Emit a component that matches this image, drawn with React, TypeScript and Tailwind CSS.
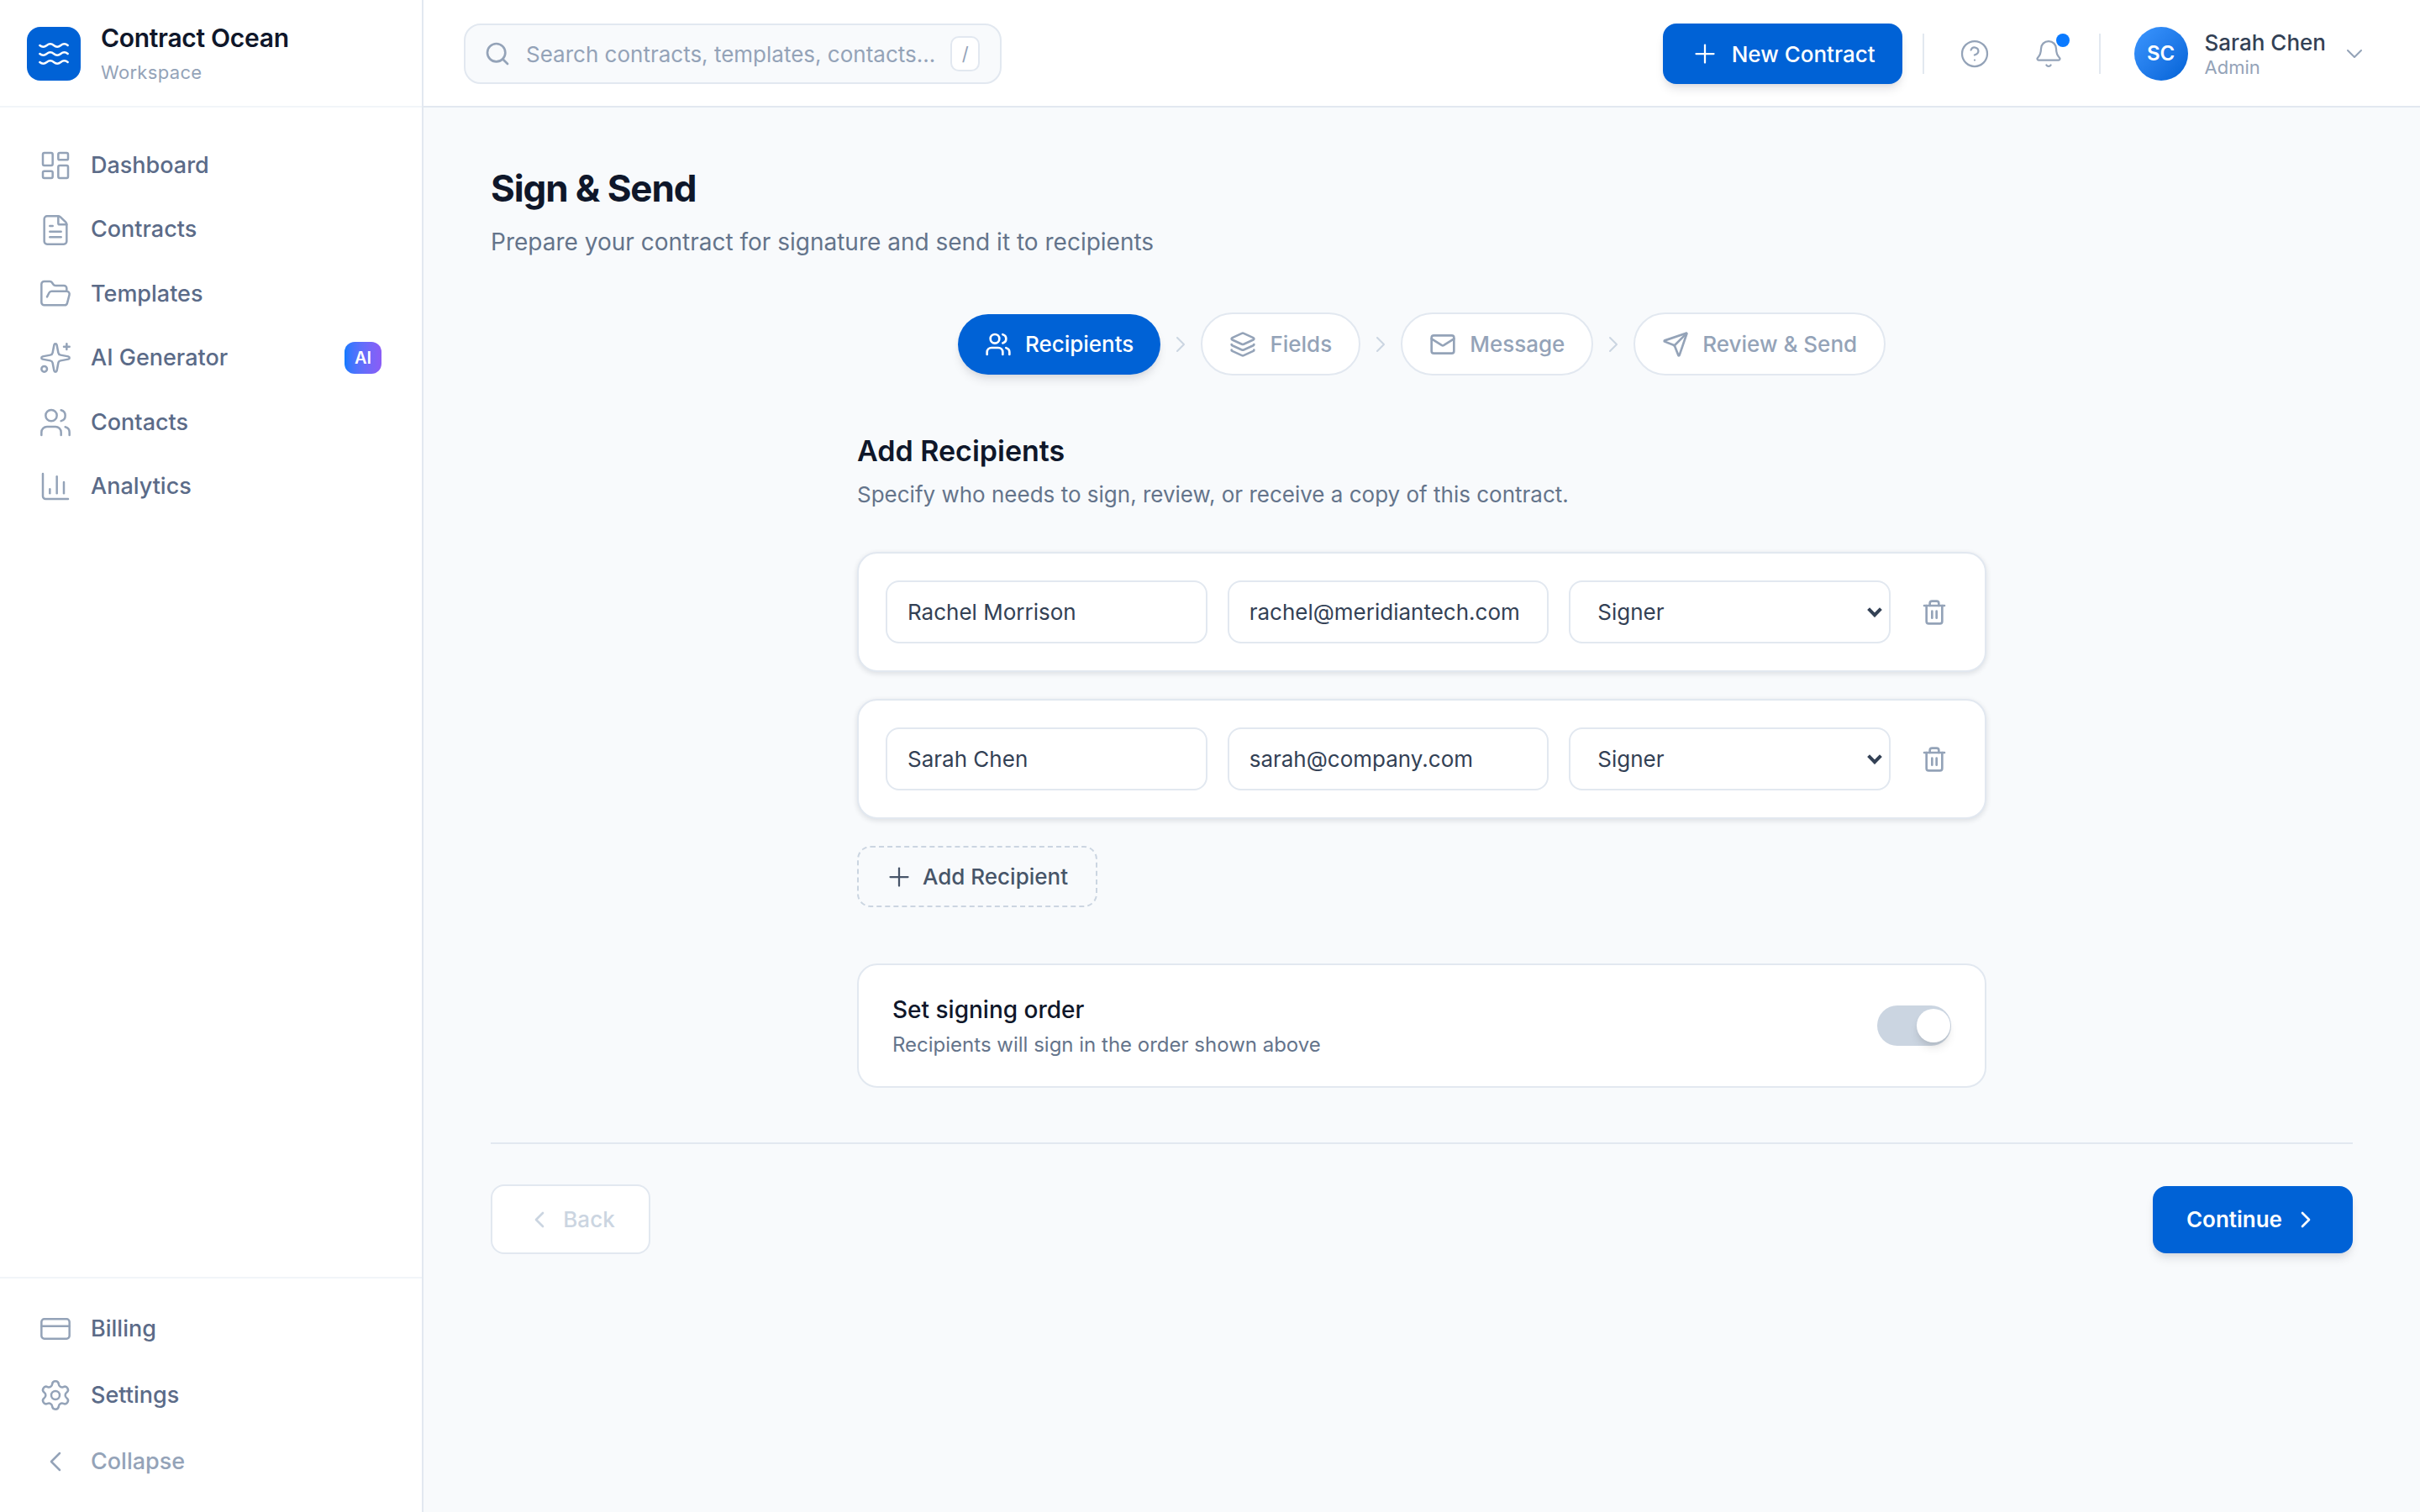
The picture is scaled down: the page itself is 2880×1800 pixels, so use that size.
import {
  Bell,
  ChartColumn,
  ChevronDown,
  ChevronLeft,
  ChevronRight,
  CircleHelp,
  CreditCard,
  FileText,
  FolderOpen,
  Layers,
  LayoutDashboard,
  Mail,
  Plus,
  Search,
  Send,
  Settings,
  Sparkles,
  Trash2,
  Users,
  Waves,
} from "lucide-react";

const mainNav = [
  { label: "Dashboard", icon: LayoutDashboard },
  { label: "Contracts", icon: FileText },
  { label: "Templates", icon: FolderOpen },
  { label: "AI Generator", icon: Sparkles, badge: true },
  { label: "Contacts", icon: Users },
  { label: "Analytics", icon: ChartColumn },
];

const steps = [
  { label: "Recipients", icon: Users },
  { label: "Fields", icon: Layers },
  { label: "Message", icon: Mail },
  { label: "Review & Send", icon: Send },
];

const recipients = [
  { name: "Rachel Morrison", email: "rachel@meridiantech.com" },
  { name: "Sarah Chen", email: "sarah@company.com" },
];

function Sidebar() {
  return (
    <aside className="flex w-[252px] shrink-0 flex-col border-r border-[#e2e8f0] bg-white">
      <div className="flex h-16 shrink-0 items-center gap-3 border-b border-[#f1f5f9] px-4">
        <div className="mt-px flex h-8 w-8 items-center justify-center rounded-lg bg-[#0062d6]">
          <Waves size={20} strokeWidth={1.5} className="text-white" />
        </div>
        <div>
          <p className="text-[15px] leading-5 font-semibold tracking-[-0.01em] text-[#0f172a]">Contract Ocean</p>
          <p className="mt-[2.5px] text-[11px] leading-4 tracking-[0.015em] text-[#94a3b8]">Workspace</p>
        </div>
      </div>

      <nav className="flex flex-1 flex-col gap-0.5 px-3 pt-[16.5px]">
        {mainNav.map((item) => (
          <a key={item.label} className="flex h-[36.2px] items-center gap-[11px] rounded-lg px-[11px] text-[13.5px] font-medium text-[#5b6b88]">
            <item.icon size={20} strokeWidth={1.5} className="shrink-0 text-[#94a3b8]" />
            <span className="flex-1">{item.label}</span>
            {item.badge && (
              <span className="mr-px flex h-[19px] w-[22px] items-center justify-center rounded-md bg-gradient-to-r from-[#0a7aff] to-[#8b5cf6] text-[10px] font-semibold text-white">
                AI
              </span>
            )}
          </a>
        ))}
      </nav>

      <div className="flex flex-col gap-[3.5px] border-t border-[#f1f5f9] px-3 pt-3 pb-3">
        <a className="flex h-9 items-center gap-[11px] rounded-lg px-[11px] text-[13.5px] font-medium text-[#5b6b88]">
          <CreditCard size={20} strokeWidth={1.5} className="text-[#94a3b8]" />
          Billing
        </a>
        <a className="flex h-9 items-center gap-[11px] rounded-lg px-[11px] text-[13.5px] font-medium text-[#5b6b88]">
          <Settings size={20} strokeWidth={1.5} className="text-[#94a3b8]" />
          Settings
        </a>
        <button className="flex h-9 items-center gap-[11px] rounded-lg px-[11px] text-[13.5px] font-medium text-[#94a3b8]">
          <ChevronLeft size={20} strokeWidth={1.5} />
          Collapse
        </button>
      </div>
    </aside>
  );
}

function Topbar() {
  return (
    <header className="flex h-16 shrink-0 items-center justify-between border-b border-[#e2e8f0] bg-white pt-px pr-[31px] pl-6">
      <div className="flex h-9 w-80 items-center gap-[9px] rounded-[10px] border border-[#e2e8f0] bg-[#f8fafc] pr-3 pl-[11px]">
        <Search size={16} strokeWidth={2} className="shrink-0 text-[#94a3b8]" />
        <span className="flex-1 text-[13px] whitespace-nowrap text-[#94a3b8]">Search contracts, templates, contacts...</span>
        <kbd className="flex h-[21px] w-5 items-center justify-center rounded-[5px] border border-[#e2e8f0] bg-white font-['Inter',sans-serif] text-[11px] text-[#94a3b8]">
          /
        </kbd>
      </div>

      <div className="flex items-center">
        <button className="flex h-9 items-center gap-[7px] rounded-lg bg-[#0062d6] px-4 text-[13px] font-medium text-white shadow-md shadow-slate-900/10">
          <Plus size={18} strokeWidth={1.5} />
          New Contract
        </button>
        <div className="mx-3 h-6 w-px bg-[#e2e8f0]" />
        <CircleHelp size={18} strokeWidth={1.5} className="ml-[9px] text-[#94a3b8]" />
        <div className="relative ml-[26px]">
          <Bell size={18} strokeWidth={1.5} className="text-[#94a3b8]" />
          <span className="absolute -top-[3px] -right-[3.5px] h-2 w-2 rounded-full bg-[#0a7aff]" />
        </div>
        <div className="mr-5 ml-[21px] h-6 w-px bg-[#e2e8f0]" />
        <div className="flex h-8 w-8 items-center justify-center rounded-full bg-gradient-to-br from-[#3b96ff] to-[#0062d6] text-xs font-semibold text-white">
          SC
        </div>
        <div className="ml-2.5">
          <p className="text-[13px] leading-[16px] font-medium text-[#334155]">Sarah Chen</p>
          <p className="text-[11px] leading-[13px] text-[#94a3b8]">Admin</p>
        </div>
        <ChevronDown size={16} strokeWidth={1.5} className="ml-[9px] text-[#94a3b8]" />
      </div>
    </header>
  );
}

function Stepper() {
  return (
    <div className="mt-[31.5px] flex items-center justify-center gap-1">
      {steps.map((step, i) => (
        <div key={step.label} className="flex items-center gap-1">
          {i > 0 && <ChevronRight size={16} strokeWidth={1.5} className="text-[#cbd5e1]" />}
          {i === 0 ? (
            <div className="flex h-9 items-center gap-2 rounded-full bg-[#0062d6] px-4 text-[13px] font-medium text-white shadow-md shadow-slate-900/10">
              <step.icon size={16} strokeWidth={2} />
              {step.label}
            </div>
          ) : (
            <div className="flex h-[37.5px] items-center gap-2 rounded-full border border-[#e2e8f0] bg-white px-4 text-[13px] font-medium text-[#94a3b8]">
              <step.icon size={16} strokeWidth={2} />
              {step.label}
            </div>
          )}
        </div>
      ))}
    </div>
  );
}

function RecipientCard({ name, email }: { name: string; email: string }) {
  const field =
    "h-[37.5px] w-full rounded-lg border border-[#e2e8f0] bg-white px-3 font-['Inter',sans-serif] text-[13px] text-[#334155] outline-none";
  return (
    <div className="grid grid-cols-[1fr_1fr_1fr_28px] items-center gap-3 rounded-xl border border-[#e2e8f0] bg-white p-4 shadow-[0_1px_3px_rgba(15,23,42,0.12)]">
      <input className={field} defaultValue={name} />
      <input className={field} defaultValue={email} />
      <div className="relative">
        <select
          className="h-[37.5px] w-full appearance-none rounded-lg border border-[#e2e8f0] bg-white pl-4 font-['Inter',sans-serif] text-[13px] text-[#334155] outline-none"
          defaultValue="Signer"
        >
          <option>Signer</option>
          <option>Reviewer</option>
          <option>CC</option>
        </select>
        <svg viewBox="0 0 9 6" className="pointer-events-none absolute top-1/2 right-[5px] h-1.5 w-[9px] -translate-y-1/2 text-[#334155]" fill="none">
          <path d="M0.8 0.8 4.5 4.6 8.2 0.8" stroke="currentColor" strokeWidth="2" />
        </svg>
      </div>
      <button className="flex h-7 w-7 items-center justify-center text-[#94a3b8]">
        <Trash2 size={16} strokeWidth={2} />
      </button>
    </div>
  );
}

export default function App() {
  return (
    <div className="flex h-[900px] w-[1440px] bg-[#f8fafc] font-['Inter',sans-serif] [zoom:2]">
      <Sidebar />
      <main className="flex min-w-0 flex-1 flex-col">
        <Topbar />
        <div className="px-10 pt-8">
          <h1 className="text-[22px] leading-8 font-bold tracking-tight text-[#0f172a]">Sign &amp; Send</h1>
          <p className="mt-[5.5px] text-sm leading-[21px] text-[#64748b]">
            Prepare your contract for signature and send it to recipients
          </p>

          <Stepper />

          <div className="mx-auto mt-[31px] w-[672px]">
            <h2 className="text-[17px] leading-7 font-semibold text-[#0f172a]">Add Recipients</h2>
            <p className="mt-[1.5px] text-[13px] leading-[21px] text-[#64748b]">
              Specify who needs to sign, review, or receive a copy of this contract.
            </p>

            <div className="mt-[23.5px] flex flex-col gap-4">
              {recipients.map((r) => (
                <RecipientCard key={r.email} name={r.name} email={r.email} />
              ))}
            </div>

            <button className="mt-4 flex h-[36.5px] w-[143px] items-center gap-[5px] rounded-lg border border-dashed border-[#cbd5e1] pl-[15px] text-[13px] font-medium text-[#475569]">
              <Plus size={18} strokeWidth={1.5} />
              Add Recipient
            </button>

            <div className="mt-[33.5px] flex h-[74px] items-center justify-between rounded-xl border border-[#e2e8f0] bg-white px-5">
              <div>
                <p className="text-sm leading-[22px] font-medium text-[#0f172a]">Set signing order</p>
                <p className="mt-px text-xs leading-[18px] text-[#64748b]">Recipients will sign in the order shown above</p>
              </div>
              <div className="flex h-6 w-11 items-center justify-end rounded-full bg-[#cbd5e1] pr-[0.5px]">
                <div className="h-5 w-5 rounded-full bg-white shadow-md" />
              </div>
            </div>
          </div>

          <div className="mt-[32.5px] flex items-center justify-between border-t border-[#e2e8f0] pt-6">
            <button className="flex h-[41.5px] w-[95px] items-center justify-center gap-1.5 rounded-lg border border-[#e2e8f0] bg-white text-[13px] font-medium text-[#cbd5e1]">
              <ChevronLeft size={16} strokeWidth={2} />
              Back
            </button>
            <button className="flex h-10 items-center gap-1.5 rounded-lg bg-[#0062d6] px-5 text-[13px] font-semibold text-white shadow-md shadow-slate-900/10">
              Continue
              <ChevronRight size={16} strokeWidth={2} />
            </button>
          </div>
        </div>
      </main>
    </div>
  );
}
